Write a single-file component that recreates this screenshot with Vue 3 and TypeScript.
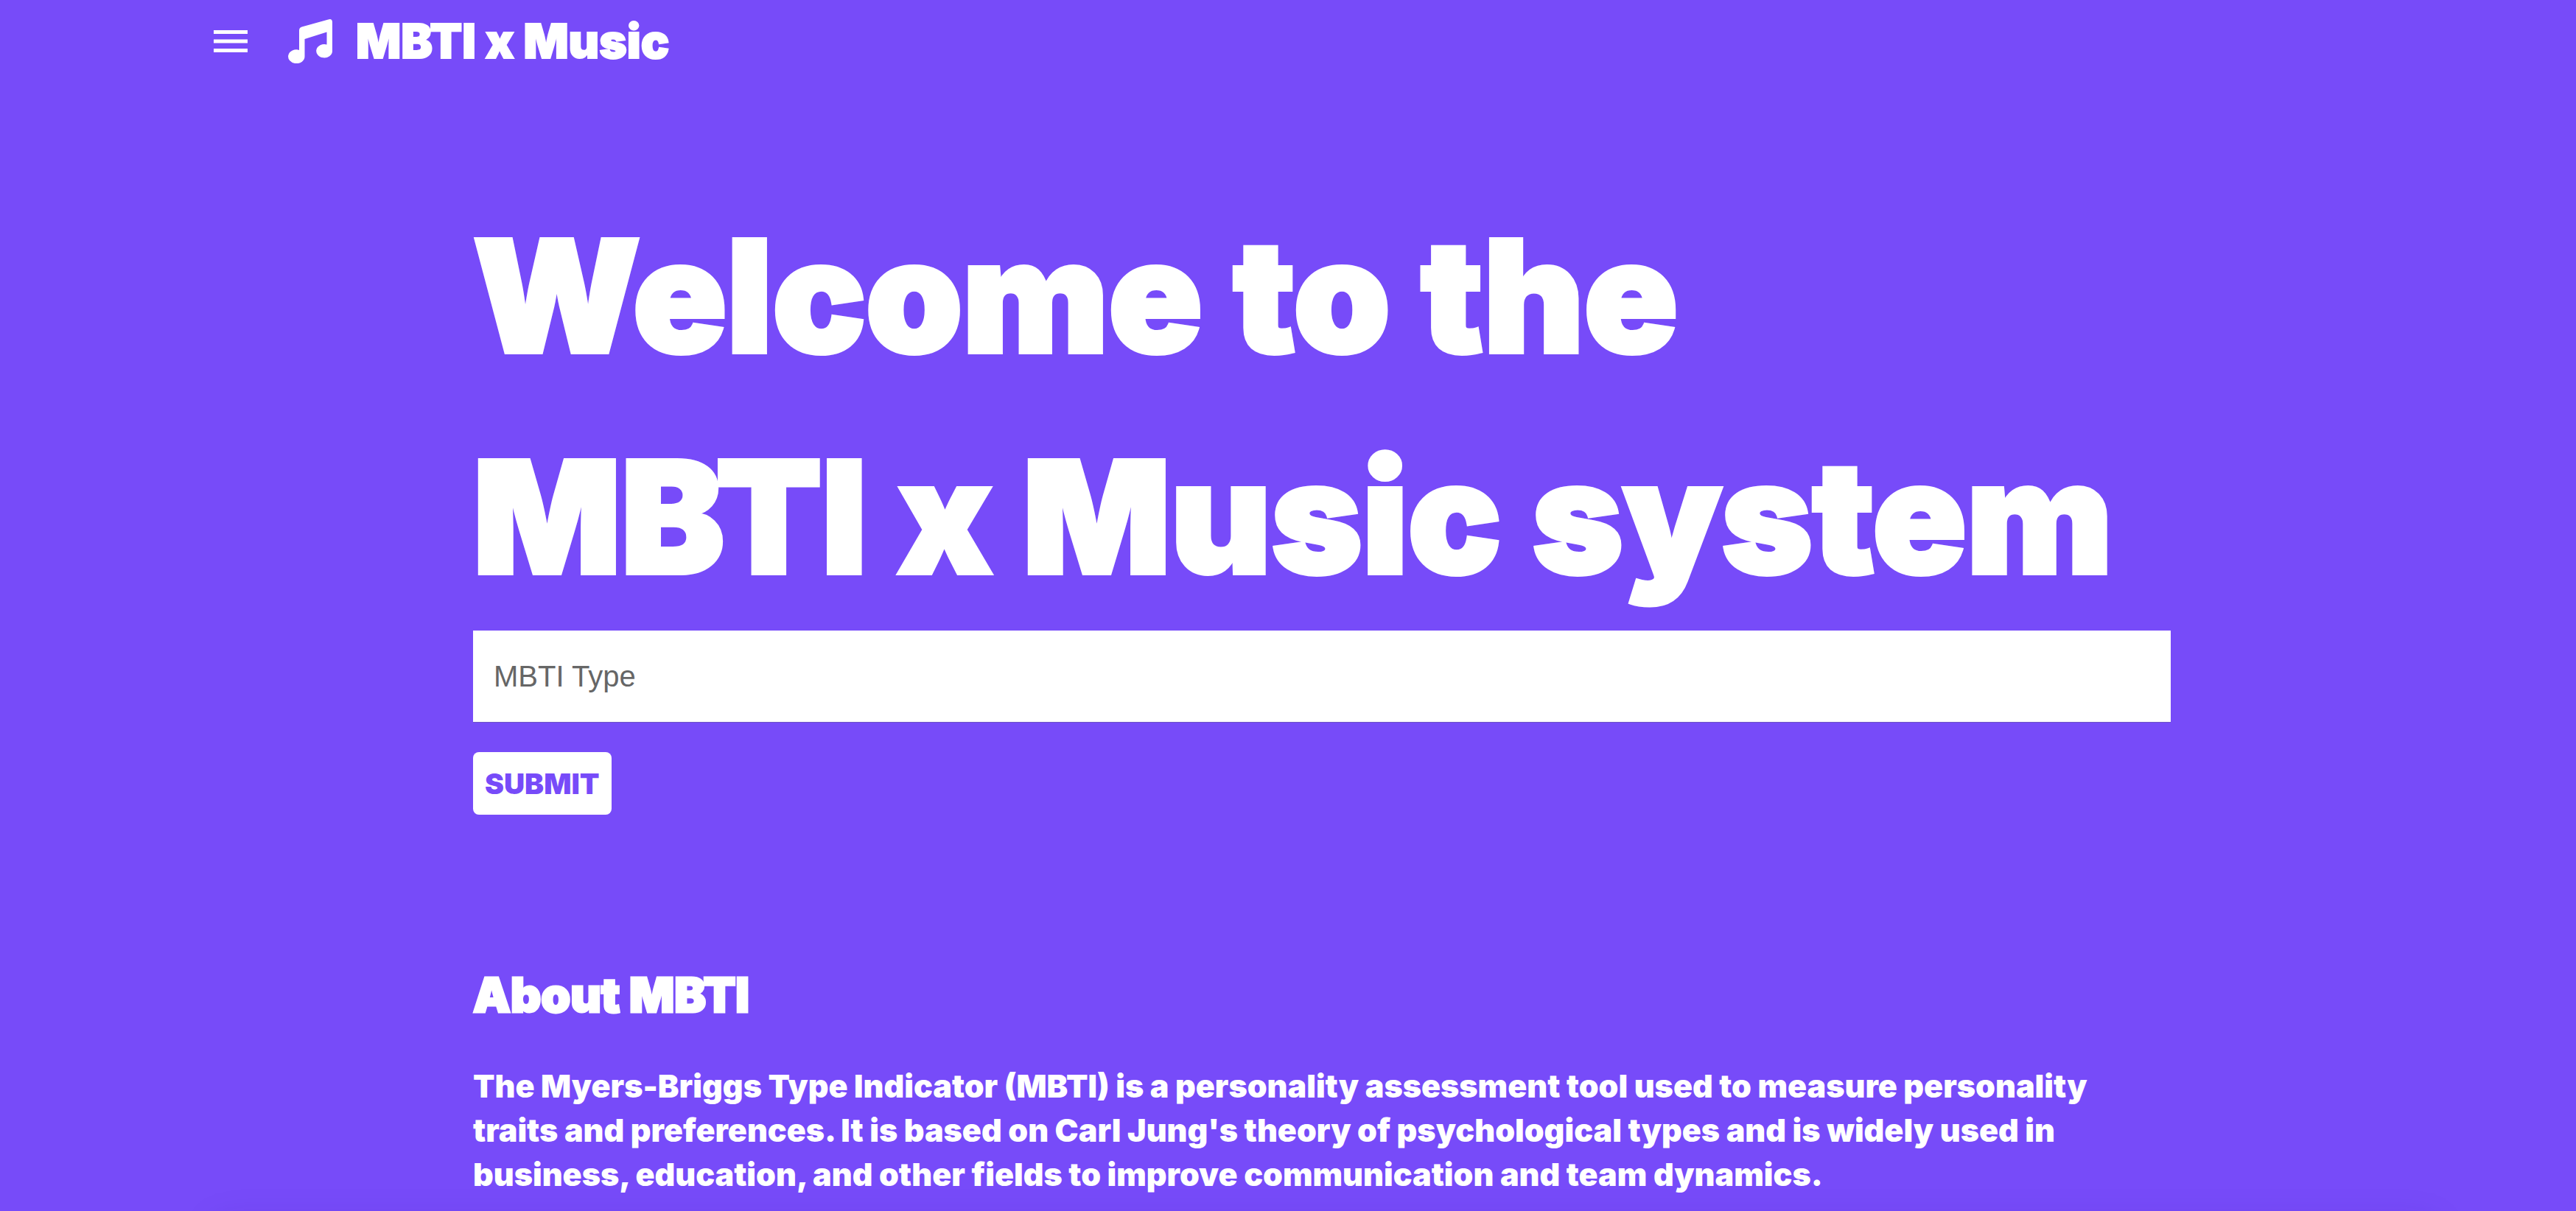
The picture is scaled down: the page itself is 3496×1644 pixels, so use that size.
<script setup lang="ts">
import { ref } from 'vue'

const mbtiType = ref('')
const titleLines: string[] = ['Welcome to the', 'MBTI x Music system']
const aboutLines: string[] = [
  'The Myers-Briggs Type Indicator (MBTI) is a personality assessment tool used to measure personality',
  "traits and preferences. It is based on Carl Jung's theory of psychological types and is widely used in",
  'business, education, and other fields to improve communication and team dynamics.',
]
</script>

<template>
  <div class="page">
    <header class="bar">
      <button class="menu" type="button" aria-label="Open menu">
        <svg viewBox="0 0 46 30" aria-hidden="true">
          <path d="M0 0h46v5H0zM0 12.500h46v5H0zM0 25h46v5H0z" />
        </svg>
      </button>
      <a class="brand" href="#">
        <svg class="note" viewBox="0 0 60 60" aria-hidden="true">
          <path
            d="M54.500.6C57.500-.7 60 .5 60 4v39.500a10.900 9.200 0 1 1-7.500-9V17.500L22.500 27v23.500a11.200 9.400 0 1 1-7.500-8.600V15.500c0-2.800 1.200-4 3.500-5z"
          />
        </svg>
        <span>MBTI x Music</span>
      </a>
    </header>

    <main class="content">
      <h1 class="title">
        <span v-for="line in titleLines" :key="line">{{ line }}</span>
      </h1>
      <form class="form" @submit.prevent>
        <input v-model="mbtiType" class="field" type="text" placeholder="MBTI Type" aria-label="MBTI Type" />
        <button class="submit" type="submit">SUBMIT</button>
      </form>
      <section class="about">
        <h2>About MBTI</h2>
        <p>
          <span v-for="line in aboutLines" :key="line">{{ line }}</span>
        </p>
      </section>
    </main>
    <div class="panel"></div>
  </div>
</template>

<style>
body {
  margin: 0;
  background: #774bf9;
}
</style>

<style scoped>
.page {
  height: 100vh;
  overflow: hidden;
  background: #774bf9;
  color: #fff;
  font-family: Inter, 'Open Sans', sans-serif;
  font-weight: 900;
}

.bar {
  display: flex;
  align-items: center;
  height: 112px;
  padding-left: 290px;
}

.menu {
  display: flex;
  width: 46px;
  padding: 0;
  border: 0;
  background: none;
}

.menu svg {
  width: 46px;
  height: 30px;
  fill: #fff;
}

.brand {
  display: flex;
  align-items: center;
  gap: 32px;
  margin-left: 55px;
  color: #fff;
  font-size: 64px;
  line-height: 64px;
  text-decoration: none;
  white-space: nowrap;
  -webkit-text-stroke: 2px #fff;
}

.note {
  width: 60px;
  height: 60px;
  fill: #fff;
  -webkit-text-stroke: 0;
}

.content {
  box-sizing: border-box;
  max-width: 2400px;
  margin: 0 auto;
  padding: 140px 2px 0 94px;
}

.title {
  margin: 0 0 4px;
  font-size: 210px;
  font-weight: 900;
  line-height: 300px;
  white-space: nowrap;
  -webkit-text-stroke: 6px #fff;
}

.title span,
.about span {
  display: block;
}

.form {
  display: flex;
  flex-direction: column;
  align-items: flex-start;
  gap: 40px;
}

.field {
  box-sizing: border-box;
  width: 100%;
  height: 125px;
  padding: 0 28px;
  border: 0;
  border-bottom: 1px solid #6e55c4;
  border-radius: 0;
  background: #fff;
  color: #222;
  font-family: 'Liberation Sans', Arial, sans-serif;
  font-size: 40px;
}

.field::placeholder {
  color: #666;
  opacity: 1;
}

.submit {
  height: 85px;
  padding: 0 16px;
  border: 0;
  border-radius: 8px;
  background: #fff;
  color: #774bf9;
  font-family: inherit;
  font-size: 39px;
  font-weight: 900;
}

.about {
  margin-top: 200px;
}

.about h2 {
  margin: 0;
  font-size: 64px;
  font-weight: 900;
  line-height: 90px;
  -webkit-text-stroke: 3px #fff;
}

.about p {
  margin: 48px 0 0;
  font-size: 43px;
  line-height: 60px;
  white-space: nowrap;
}

.panel {
  height: 200px;
  margin: 36px 190px 0 290px;
  box-shadow: 0 0 48px rgba(40, 20, 120, 0.12);
}
</style>
